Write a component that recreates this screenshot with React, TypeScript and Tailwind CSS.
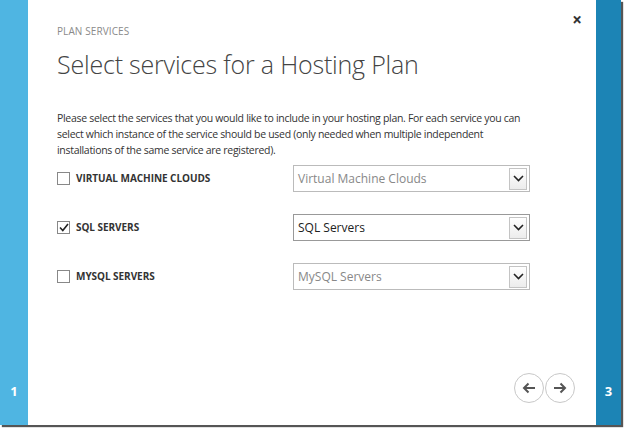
import React, { useState } from 'react';

const services = [
  { key: 'vmc', label: 'VIRTUAL MACHINE CLOUDS', value: 'Virtual Machine Clouds', checked: false },
  { key: 'sql', label: 'SQL SERVERS', value: 'SQL Servers', checked: true },
  { key: 'mysql', label: 'MYSQL SERVERS', value: 'MySQL Servers', checked: false },
];

const Chevron: React.FC = () => (
  <svg width="11" height="7" viewBox="0 0 11 7">
    <path d="M1 1l4.5 4.5L10 1" fill="none" stroke="#222" strokeWidth="1.6" />
  </svg>
);

const ServiceRow: React.FC<{ label: string; value: string; checked: boolean; onToggle: () => void }> = ({ label, value, checked, onToggle }) => (
  <div className="flex items-center h-[27px]">
    <button onClick={onToggle} className="flex items-center w-[236px] text-left">
      <span className="w-[13px] h-[13px] border border-[#888] bg-white flex items-center justify-center">
        {checked && (
          <svg width="10" height="9" viewBox="0 0 10 9">
            <path d="M1 4.5l2.8 3L9 1" fill="none" stroke="#222" strokeWidth="1.6" />
          </svg>
        )}
      </span>
      <span className="ml-[6px] text-[10px] font-bold text-[#333] tracking-[-0.05px]">{label}</span>
    </button>
    <div className={`w-[237px] h-[27px] border ${checked ? 'border-[#999]' : 'border-[#bbb]'} bg-white flex items-center pl-[4px] pr-[2px]`}>
      <span className={`flex-1 text-[12px] ${checked ? 'text-[#222]' : 'text-[#888]'}`}>{value}</span>
      <span className="w-[18px] h-[22px] border border-[#c4c4c4] bg-gradient-to-b from-white to-[#ececec] flex items-center justify-center">
        <Chevron />
      </span>
    </div>
  </div>
);

const NavButton: React.FC<{ dir: 'left' | 'right' }> = ({ dir }) => (
  <button className="w-[30px] h-[30px] rounded-full border-[1.5px] border-[#c8c8c8] bg-white flex items-center justify-center">
    <svg width="14" height="12" viewBox="0 0 14 12">
      {dir === 'left' ? (
        <path d="M13 6H2M6.5 1.5L2 6l4.5 4.5" fill="none" stroke="#555" strokeWidth="2" />
      ) : (
        <path d="M1 6h11M7.5 1.5L12 6l-4.5 4.5" fill="none" stroke="#555" strokeWidth="2" />
      )}
    </svg>
  </button>
);

export default function App() {
  const [checked, setChecked] = useState<Record<string, boolean>>(
    Object.fromEntries(services.map(s => [s.key, s.checked]))
  );

  return (
    <div className="w-[625px] h-[430px] bg-white" style={{ fontFamily: '"Open Sans", sans-serif' }}>
      <div className="w-[621px] h-[425px] flex shadow-[2px_2px_1px_#555]">
        {/* Left step */}
        <div className="w-[28px] bg-[#4fb5e2] flex flex-col justify-end items-center pb-[24px]">
          <span className="text-white font-bold text-[13px]">1</span>
        </div>

        {/* Main panel */}
        <div className="flex-1 bg-white flex flex-col px-[29px] pt-[24px] relative">
          <button className="absolute right-[14px] top-[11px] text-[#333] text-[17px] font-bold leading-none">×</button>
          <div className="text-[10px] text-[#8a8a8a] tracking-[0.1px]">PLAN SERVICES</div>
          <h1 className="mt-[8px] text-[25px] font-light text-[#444] leading-[34px] tracking-[-0.2px]">Select services for a Hosting Plan</h1>
          <p className="mt-[29px] text-[10.5px] leading-[16px] text-[#333] tracking-[-0.3px] whitespace-nowrap">
            Please select the services that you would like to include in your hosting plan. For each service you can
            <br />
            select which instance of the service should be used (only needed when multiple independent
            <br />
            installations of the same service are registered).
          </p>
          <div className="mt-[7px] flex flex-col gap-[22px]">
            {services.map(s => (
              <ServiceRow
                key={s.key}
                label={s.label}
                value={s.value}
                checked={checked[s.key]}
                onToggle={() => setChecked(c => ({ ...c, [s.key]: !c[s.key] }))}
              />
            ))}
          </div>
          <div className="mt-auto mb-[22px] -mr-[8px] flex justify-end gap-[1px]">
            <NavButton dir="left" />
            <NavButton dir="right" />
          </div>
        </div>

        {/* Right step */}
        <div className="w-[25px] bg-[#1c84b5] flex flex-col justify-end items-center pb-[24px]">
          <span className="text-white font-bold text-[13px]">3</span>
        </div>
      </div>
    </div>
  );
}
